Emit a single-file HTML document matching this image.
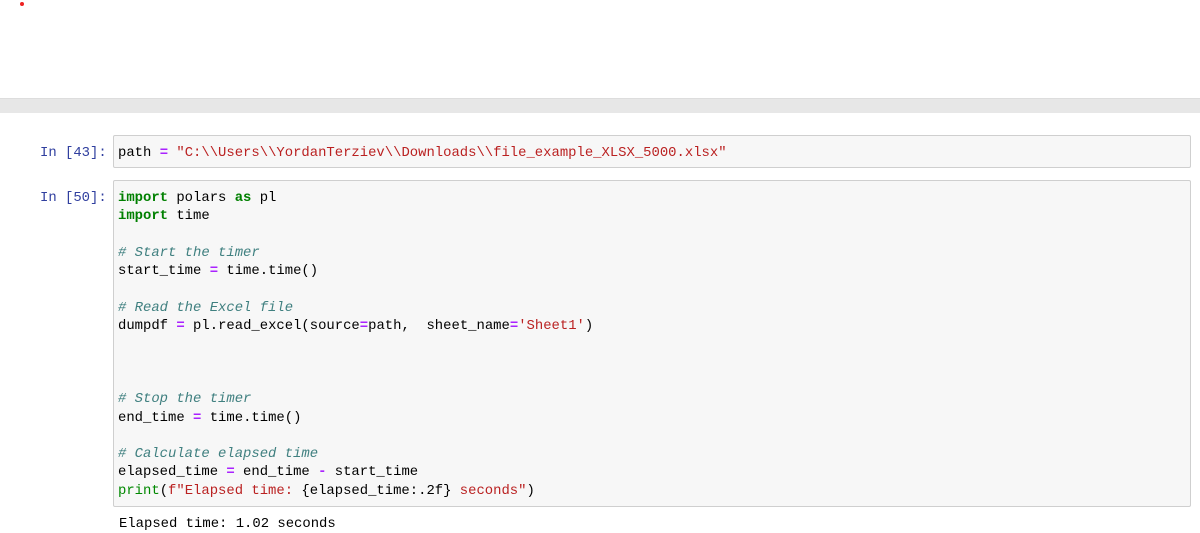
<!DOCTYPE html>
<html><head><style>
body{margin:0;width:1200px;height:533px;background:#fff;position:relative;overflow:hidden;font-family:"Liberation Mono",monospace;font-size:13.9px}
.dot{position:absolute;left:20px;top:2px;width:4px;height:4px;border-radius:50%;background:#e22}
.bar{position:absolute;left:0;top:98px;width:1200px;height:14px;background:#e7e7e7;border-top:1px solid #ddd}
.prompt{position:absolute;left:40px;color:#303f9f;line-height:18.3px}
.cell{position:absolute;left:113px;width:1078px;background:#f7f7f7;border:1px solid #cfcfcf;border-radius:2px;box-sizing:border-box}
pre{margin:0;font:inherit;line-height:18.3px;padding:5px 4px;color:#000;white-space:pre}
.k{color:#008000;font-weight:bold}.o{color:#aa22ff;font-weight:bold}.s{color:#ba2121}.c{color:#408080;font-style:italic}.n{color:#080}
.out{position:absolute;left:119px;top:515px;line-height:18px}
</style></head><body>
<div class="dot"></div>
<div class="bar"></div>
<div class="prompt" style="top:144px">In [43]:</div>
<div class="cell" style="top:135px;height:33px"><pre style="padding-top:8px">path <span class="o">=</span> <span class="s">"C:\\Users\\YordanTerziev\\Downloads\\file_example_XLSX_5000.xlsx"</span></pre></div>
<div class="prompt" style="top:189px">In [50]:</div>
<div class="cell" style="top:180px;height:327px"><pre style="padding-top:8px"><span class="k">import</span> polars <span class="k">as</span> pl
<span class="k">import</span> time

<span class="c"># Start the timer</span>
start_time <span class="o">=</span> time<span>.</span>time()

<span class="c"># Read the Excel file</span>
dumpdf <span class="o">=</span> pl<span>.</span>read_excel(source<span class="o">=</span>path,  sheet_name<span class="o">=</span><span class="s">'Sheet1'</span>)



<span class="c"># Stop the timer</span>
end_time <span class="o">=</span> time<span>.</span>time()

<span class="c"># Calculate elapsed time</span>
elapsed_time <span class="o">=</span> end_time <span class="o">-</span> start_time
<span class="n">print</span>(<span class="s">f"Elapsed time: </span>{elapsed_time:.2f}<span class="s"> seconds"</span>)</pre></div>
<div class="out">Elapsed time: 1.02 seconds</div>
</body></html>
